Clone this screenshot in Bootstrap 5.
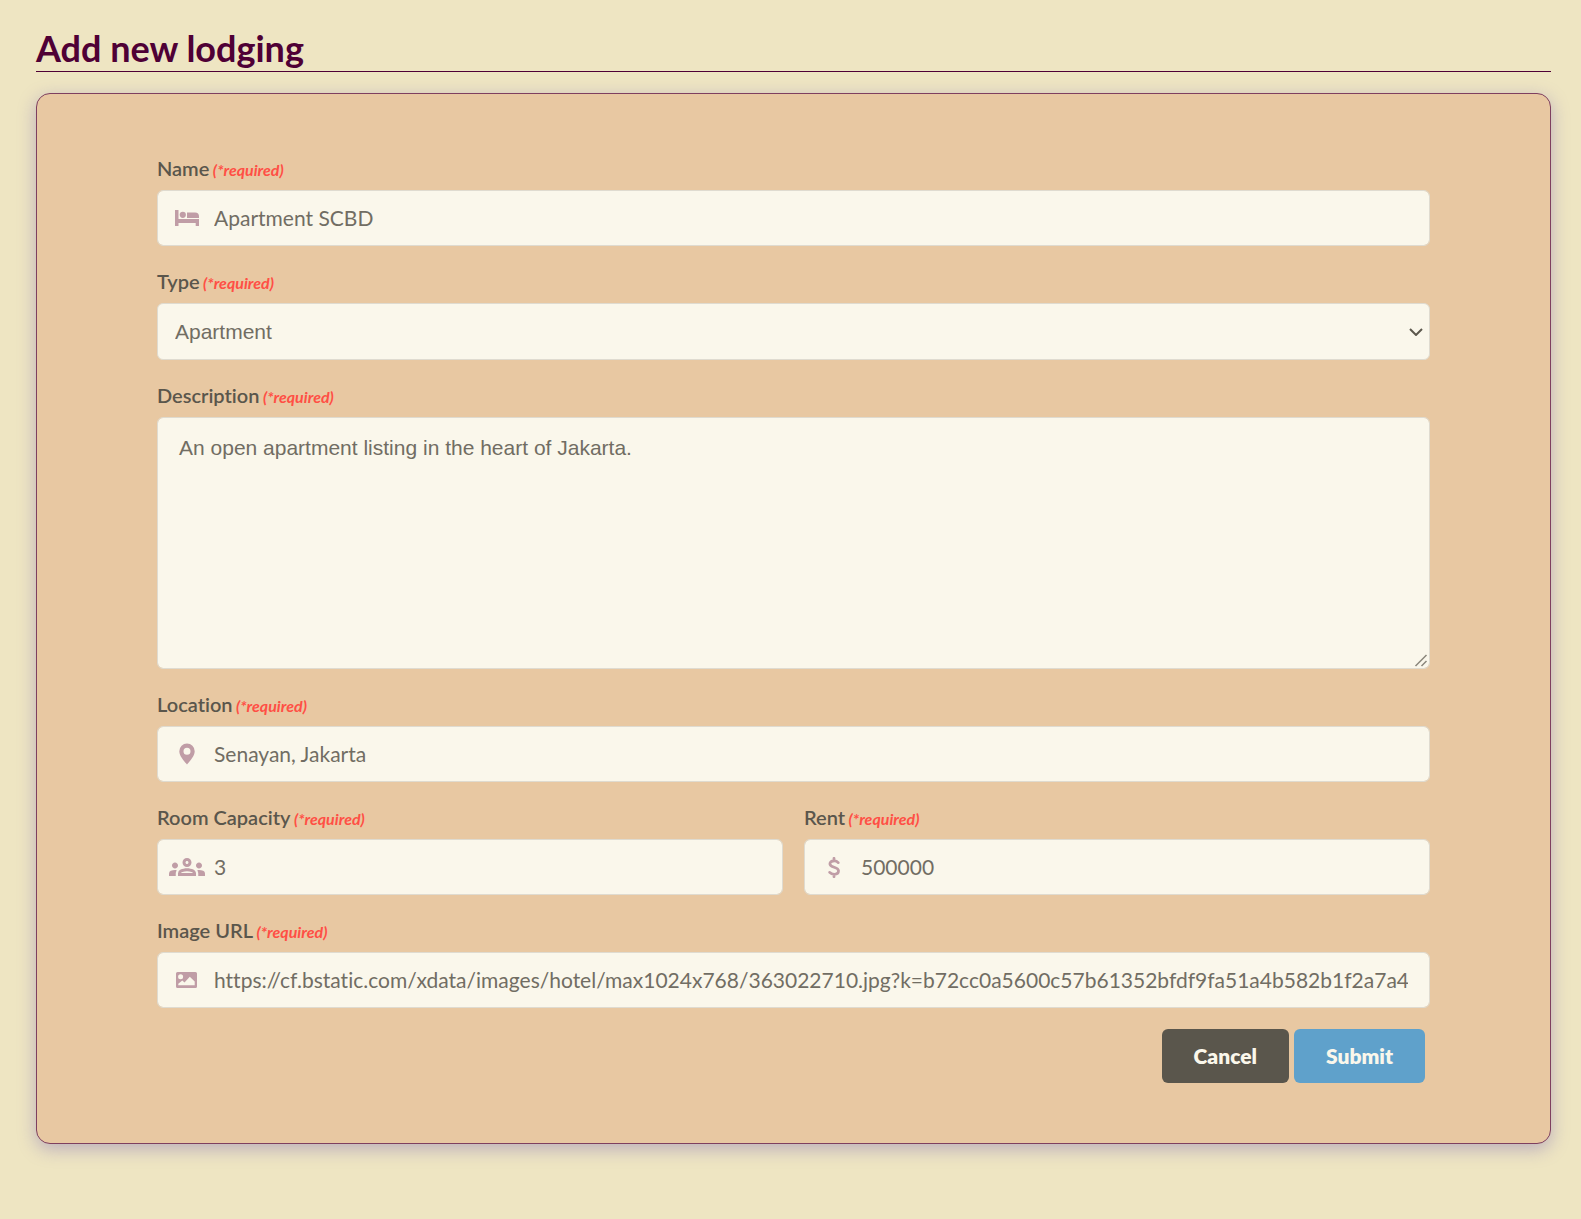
<!DOCTYPE html>
<html lang="en">
<head>
<meta charset="utf-8">
<meta name="viewport" content="width=device-width, initial-scale=1">
<title>Add new lodging</title>
<link rel="stylesheet" href="https://cdn.jsdelivr.net/npm/bootstrap@5.3.0/dist/css/bootstrap.min.css">
<script src="https://cdn.jsdelivr.net/npm/bootstrap@5.3.0/dist/js/bootstrap.bundle.min.js" defer></script>
<style>
  body { background: #eee5c2; color: #5a564c; font-family: Lato, sans-serif; font-variant-ligatures: none; }
  .page { padding: 26px 30px 75px 36px; }
  .page-title { color: #4f0035; font-size: 36px; line-height: 44px; font-weight: 700; border-bottom: 1px solid #4f0035; padding-bottom: 1px; margin-bottom: 21px; }
  .lodging-card { --bs-card-bg: #e8c8a2; --bs-card-border-color: #7e3f5f; --bs-card-border-radius: 14px; --bs-card-color: #5a564c; box-shadow: 0 5px 18px rgba(110, 90, 180, .4); }
  .lodging-form { padding: 60px 120px; gap: 21px; }
  .field-label { display: block; font-size: 20px; line-height: 28px; font-weight: 600; margin-bottom: 8px; }
  .req { color: #ff4f45; font-size: 16px; line-height: 16px; font-style: italic; font-weight: 700; }
  .field-box.form-control, .field-box.form-select { background-color: #faf7eb; border: 1px solid #dfdbd0; border-radius: 6px; color: #716d63; font-size: 21px; line-height: 28px; padding: 13px 21px; font-variant-ligatures: none; }
  .field-box.with-icon { padding-left: 56px; }
  .field-box.form-select { font-family: "Liberation Sans", Arial, sans-serif; height: 57px; padding-left: 17px;
    background-image: url("data:image/svg+xml,%3Csvg xmlns='http://www.w3.org/2000/svg' viewBox='0 0 14 8'%3E%3Cpath d='M1 1l6 6 6-6' fill='none' stroke='%235c584d' stroke-width='2'/%3E%3C/svg%3E");
    background-size: 14px 8px; background-position: right 6px center; }
  textarea.field-box.form-control { font-family: "Liberation Sans", Arial, sans-serif; height: 252px; padding-top: 16px; resize: vertical; display: block; }
  textarea.field-box::-webkit-resizer { background: url("data:image/svg+xml,%3Csvg xmlns='http://www.w3.org/2000/svg' viewBox='0 0 15 15'%3E%3Cpath d='M1.500 13L12.500 2M7.500 13l5-5' fill='none' stroke='%238a867b' stroke-width='1.500'/%3E%3C/svg%3E") no-repeat right bottom / 15px 15px; }
  .field-icon { width: 59px; color: #c09da6; pointer-events: none; }
  .gap-field { gap: 21px; }
  .form-actions { gap: 5px; padding-right: 5px; }
  .action-btn { --bs-btn-color: #faf7eb; --bs-btn-hover-color: #faf7eb; --bs-btn-border-width: 0; --bs-btn-border-radius: 6px; --bs-btn-font-size: 21px; --bs-btn-font-weight: 800; --bs-btn-padding-x: 32px; --bs-btn-padding-y: 13px; line-height: 28px; }
  .action-cancel { --bs-btn-bg: #5a564c; --bs-btn-hover-bg: #47443c; }
  .action-submit { --bs-btn-bg: #5fa1cb; --bs-btn-hover-bg: #4a8db8; }
</style>
</head>
<body>
<main class="page">
  <h1 class="page-title">Add new lodging</h1>
  <div class="card lodging-card">
    <form class="lodging-form d-flex flex-column">
      <div>
        <label class="field-label" for="name">Name<span class="req"> (*required)</span></label>
        <div class="position-relative">
          <span class="field-icon position-absolute top-0 start-0 h-100 d-flex align-items-center justify-content-center">
            <svg width="24" height="16" viewBox="0 0 24 16" fill="currentColor" aria-hidden="true"><path d="M0 0h3.5v9H24v7h-3.3v-3H3.5v3H0z"/><circle cx="7.8" cy="4.8" r="3.1"/><path d="M12 2.6h8a4 4 0 0 1 4 4v1.3H12z"/></svg>
          </span>
          <input class="form-control field-box with-icon" id="name" type="text" value="Apartment SCBD">
        </div>
      </div>
      <div>
        <label class="field-label" for="type">Type<span class="req"> (*required)</span></label>
        <select class="form-select field-box" id="type"><option selected>Apartment</option></select>
      </div>
      <div>
        <label class="field-label" for="description">Description<span class="req"> (*required)</span></label>
        <textarea class="form-control field-box" id="description">An open apartment listing in the heart of Jakarta.</textarea>
      </div>
      <div>
        <label class="field-label" for="location">Location<span class="req"> (*required)</span></label>
        <div class="position-relative">
          <span class="field-icon position-absolute top-0 start-0 h-100 d-flex align-items-center justify-content-center">
            <svg width="16" height="22" viewBox="0 0 16 22" fill="currentColor" fill-rule="evenodd" aria-hidden="true"><path d="M8 .5A7.7 7.7 0 0 0 .3 8.2C.3 13 5.2 18.200 8 21.500 10.800 18.200 15.700 13 15.700 8.200A7.700 7.700 0 0 0 8 .5zM8 4.700a3.500 3.500 0 1 1 0 7 3.500 3.500 0 0 1 0-7z"/></svg>
          </span>
          <input class="form-control field-box with-icon" id="location" type="text" value="Senayan, Jakarta">
        </div>
      </div>
      <div class="d-flex gap-field">
        <div class="flex-fill">
          <label class="field-label" for="capacity">Room Capacity<span class="req"> (*required)</span></label>
          <div class="position-relative">
            <span class="field-icon position-absolute top-0 start-0 h-100 d-flex align-items-center justify-content-center">
              <svg width="36" height="18" viewBox="0 6 24 12" fill="currentColor" aria-hidden="true"><path d="M4 13c1.100 0 2-.9 2-2s-.9-2-2-2-2 .9-2 2 .9 2 2 2zm1.130 1.100c-.37-.06-.74-.1-1.130-.1-.99 0-1.930.21-2.780.58A2.010 2.010 0 0 0 0 16.430V18h4.500v-1.610c0-.83.23-1.610.63-2.290zM20 13c1.100 0 2-.9 2-2s-.9-2-2-2-2 .9-2 2 .9 2 2 2zm4 3.430c0-.81-.48-1.530-1.220-1.850A6.950 6.950 0 0 0 20 14c-.39 0-.76.04-1.130.1.4.68.63 1.460.63 2.290V18H24v-1.570zm-7.760-2.780c-1.170-.52-2.610-.9-4.240-.9-1.630 0-3.070.39-4.240.9A2.988 2.988 0 0 0 6 16.390V18h12v-1.610c0-1.180-.68-2.260-1.760-2.740zM8.070 16c.09-.23.13-.39.91-.69.97-.38 1.990-.56 3.020-.56s2.050.18 3.020.56c.77.3.81.46.91.69H8.070zM12 8c.55 0 1 .45 1 1s-.45 1-1 1-1-.45-1-1 .45-1 1-1m0-2c-1.660 0-3 1.340-3 3s1.340 3 3 3 3-1.340 3-3-1.340-3-3-3z"/></svg>
            </span>
            <input class="form-control field-box with-icon" id="capacity" type="text" inputmode="numeric" value="3">
          </div>
        </div>
        <div class="flex-fill">
          <label class="field-label" for="rent">Rent<span class="req"> (*required)</span></label>
          <div class="position-relative">
            <span class="field-icon position-absolute top-0 start-0 h-100 d-flex align-items-center justify-content-center">
              <svg width="12" height="21" viewBox="0 0 12 21" fill="none" stroke="currentColor" stroke-width="2.800" stroke-linecap="round" aria-hidden="true"><path d="M6 1.300v2.400M6 17.300v2.400M10.200 5.600C8.800 4 6.800 3.700 5 4 2.800 4.300 1.800 5.800 2 7.200c.3 3.600 8.500 2.600 8.500 6.600 0 2.300-2 3.500-4.300 3.500-1.900 0-3.400-.6-4.500-1.900"/></svg>
            </span>
            <input class="form-control field-box with-icon" id="rent" type="text" inputmode="numeric" value="500000">
          </div>
        </div>
      </div>
      <div>
        <label class="field-label" for="image">Image URL<span class="req"> (*required)</span></label>
        <div class="position-relative">
          <span class="field-icon position-absolute top-0 start-0 h-100 d-flex align-items-center justify-content-center">
            <svg width="21" height="16" viewBox="0 0 21 16" fill="currentColor" fill-rule="evenodd" aria-hidden="true"><path d="M1.500 0h18A1.500 1.500 0 0 1 21 1.500v13a1.500 1.500 0 0 1-1.500 1.500h-18A1.500 1.500 0 0 1 0 14.500v-13A1.500 1.500 0 0 1 1.500 0zM4.600 2.200a2.500 2.500 0 1 0 0 5 2.500 2.500 0 0 0 0-5zM2.300 13.200h16.400V9.400l-4.900-4.600-5.300 5.600-2.200-1.900-4 3.200z"/></svg>
          </span>
          <input class="form-control field-box with-icon" id="image" type="text" value="https://cf.bstatic.com/xdata/images/hotel/max1024x768/363022710.jpg?k=b72cc0a5600c57b61352bfdf9fa51a4b582b1f2a7a49">
        </div>
      </div>
      <div class="form-actions d-flex justify-content-end">
        <button class="btn action-btn action-cancel" type="button">Cancel</button>
        <button class="btn action-btn action-submit" type="submit">Submit</button>
      </div>
    </form>
  </div>
</main>
</body>
</html>
